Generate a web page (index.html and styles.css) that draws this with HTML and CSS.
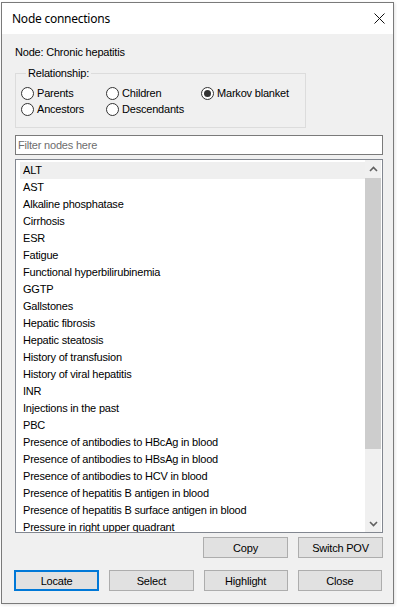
FILE: index.html
```html
<!DOCTYPE html>
<html>
<head>
<meta charset="utf-8">
<title>Node connections</title>
<link rel="stylesheet" href="styles.css">
</head>
<body>
<div class="window">
  <div class="titlebar">
    <span class="title">Node connections</span>
    <svg class="close" width="11" height="11" viewBox="0 0 11 11"><path d="M0.5 0.5 L10.5 10.5 M10.5 0.5 L0.5 10.5" stroke="#111" stroke-width="1" fill="none"/></svg>
  </div>
  <div class="content">
    <div class="node-label">Node: Chronic hepatitis</div>
    <fieldset class="group">
      <legend class="legend">Relationship:</legend>
      <div class="radios">
        <label class="radio"><span class="circle"></span><span>Parents</span></label>
        <label class="radio"><span class="circle"></span><span>Children</span></label>
        <label class="radio"><span class="circle checked"></span><span>Markov blanket</span></label>
        <label class="radio"><span class="circle"></span><span>Ancestors</span></label>
        <label class="radio"><span class="circle"></span><span>Descendants</span></label>
      </div>
    </fieldset>
    <div class="filter"><span class="placeholder">Filter nodes here</span></div>
    <div class="listbox">
      <div class="items">
        <div class="item selected">ALT</div>
        <div class="item">AST</div>
        <div class="item">Alkaline phosphatase</div>
        <div class="item">Cirrhosis</div>
        <div class="item">ESR</div>
        <div class="item">Fatigue</div>
        <div class="item">Functional hyperbilirubinemia</div>
        <div class="item">GGTP</div>
        <div class="item">Gallstones</div>
        <div class="item">Hepatic fibrosis</div>
        <div class="item">Hepatic steatosis</div>
        <div class="item">History of transfusion</div>
        <div class="item">History of viral hepatitis</div>
        <div class="item">INR</div>
        <div class="item">Injections in the past</div>
        <div class="item">PBC</div>
        <div class="item">Presence of antibodies to HBcAg in blood</div>
        <div class="item">Presence of antibodies to HBsAg in blood</div>
        <div class="item">Presence of antibodies to HCV in blood</div>
        <div class="item">Presence of hepatitis B antigen in blood</div>
        <div class="item">Presence of hepatitis B surface antigen in blood</div>
        <div class="item">Pressure in right upper quadrant</div>
      </div>
      <div class="scrollbar">
        <div class="sb-btn"><svg width="9" height="6" viewBox="0 0 9 6"><path d="M1 5 L4.5 1.5 L8 5" stroke="#606060" stroke-width="1.6" fill="none"/></svg></div>
        <div class="sb-track"><div class="sb-thumb"></div></div>
        <div class="sb-btn"><svg width="9" height="6" viewBox="0 0 9 6"><path d="M1 1 L4.5 4.5 L8 1" stroke="#606060" stroke-width="1.6" fill="none"/></svg></div>
      </div>
    </div>
    <div class="btn-row row1">
      <button class="btn">Copy</button>
      <button class="btn">Switch POV</button>
    </div>
    <div class="btn-row row2">
      <button class="btn focused">Locate</button>
      <button class="btn">Select</button>
      <button class="btn">Highlight</button>
      <button class="btn">Close</button>
    </div>
  </div>
</div>
</body>
</html>
```
FILE: styles.css
```css
html, body {
  margin: 0;
  padding: 0;
  background: #ffffff;
}
body {
  width: 397px;
  height: 607px;
  overflow: hidden;
  font-family: "Liberation Sans", Arial, sans-serif;
  font-size: 11px;
  letter-spacing: -0.2px;
  color: #000;
}
.window {
  box-sizing: border-box;
  margin: 2px 0 0 1px;
  width: 393px;
  height: 602px;
  border: 1px solid #7a7a7a;
  background: #f0f0f0;
  box-shadow: 1px 1px 3px rgba(0,0,0,0.12);
  display: flex;
  flex-direction: column;
}
.titlebar {
  height: 31px;
  background: #ffffff;
  display: flex;
  align-items: center;
  justify-content: space-between;
  padding: 0 8px 0 10px;
  flex: none;
}
.title {
  font-family: "Noto Sans", "Open Sans", sans-serif;
  font-size: 12px;
  letter-spacing: -0.25px;
  color: #000;
  margin-top: -1px;
}
.close {
  display: block;
  margin-top: -1px;
}
.content {
  padding: 0 9px 0 13px;
  display: flex;
  flex-direction: column;
}
.node-label {
  margin-top: 12px;
  line-height: 13px;
  height: 13px;
}
.group {
  margin: 8px 0 0 0;
  width: 291px;
  box-sizing: border-box;
  border: 1px solid #dcdcdc;
  padding: 5px 0 10px 5px;
  min-width: 0;
}
.legend {
  margin-left: 5px;
  padding: 0 2px;
  line-height: 13px;
}
.radios {
  display: grid;
  grid-template-columns: 85px 95px auto;
  grid-auto-rows: 16px;
}
.radio {
  display: flex;
  align-items: center;
  gap: 3px;
  line-height: 13px;
}
.circle {
  box-sizing: border-box;
  width: 13px;
  height: 13px;
  border: 1px solid #333333;
  border-radius: 50%;
  background: #ffffff;
  display: flex;
  align-items: center;
  justify-content: center;
  flex: none;
}
.circle.checked::after {
  content: "";
  width: 7px;
  height: 7px;
  border-radius: 50%;
  background: #333333;
}
.filter {
  margin-top: 7px;
  box-sizing: border-box;
  width: 368px;
  height: 20px;
  border: 1px solid #7a7a7a;
  background: #ffffff;
  display: flex;
  align-items: center;
  padding-left: 2px;
}
.placeholder {
  color: #6d6d6d;
}
.listbox {
  margin-top: 4px;
  box-sizing: border-box;
  width: 368px;
  height: 374px;
  border: 1px solid #828790;
  background: #ffffff;
  display: flex;
  overflow: hidden;
}
.items {
  flex: 1;
  padding: 2px 0 0 4px;
  overflow: hidden;
}
.item {
  height: 17px;
  line-height: 17px;
  padding-left: 3px;
  white-space: nowrap;
}
.item.selected {
  background: #efefef;
}
.scrollbar {
  width: 16px;
  flex: none;
  background: #f0f0f0;
  display: flex;
  flex-direction: column;
  margin-right: 1px;
}
.sb-btn {
  height: 17px;
  display: flex;
  align-items: center;
  justify-content: center;
  flex: none;
}
.sb-track {
  flex: 1;
  padding-top: 1px;
}
.sb-thumb {
  height: 271px;
  background: #cdcdcd;
}
.btn-row {
  display: flex;
  gap: 10px;
}
.row1 {
  margin-top: 4px;
  justify-content: flex-end;
  padding-right: 1px;
}
.row2 {
  margin-top: 12px;
  margin-left: -1px;
  justify-content: space-between;
  width: 368px;
}
.btn {
  box-sizing: border-box;
  width: 85px;
  height: 21px;
  margin: 0;
  padding: 0;
  border: 1px solid #adadad;
  background: #e1e1e1;
  font-family: "Liberation Sans", Arial, sans-serif;
  font-size: 11px;
  letter-spacing: -0.2px;
  color: #000;
  border-radius: 0;
}
.btn.focused {
  width: 86px;
  border: 2px solid #0078d7;
}
```
